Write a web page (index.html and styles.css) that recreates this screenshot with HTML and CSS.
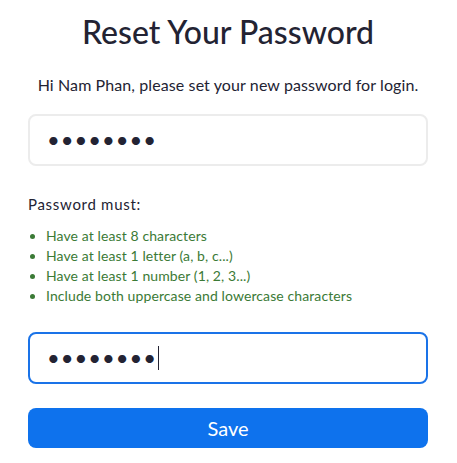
FILE: index.html
```html
<!DOCTYPE html>
<html lang="en">
<head>
<meta charset="utf-8">
<title>Reset Your Password</title>
<link rel="stylesheet" href="styles.css">
</head>
<body>
<main class="page">
  <h1 class="title">Reset Your Password</h1>
  <p class="intro">Hi Nam Phan, please set your new password for login.</p>
  <div class="field"><span class="dots">••••••••</span></div>
  <p class="rules-head">Password must:</p>
  <ul class="rules">
    <li>Have at least 8 characters</li>
    <li>Have at least 1 letter (a, b, c...)</li>
    <li>Have at least 1 number (1, 2, 3...)</li>
    <li>Include both uppercase and lowercase characters</li>
  </ul>
  <div class="field field-focus"><span class="dots">••••••••</span><span class="caret"></span></div>
  <button class="save" type="button">Save</button>
</main>
</body>
</html>
```
FILE: styles.css
```css
* { box-sizing: border-box; }
html, body { margin: 0; padding: 0; background: #fff; }
body {
  font-family: Lato, "Open Sans", "Liberation Sans", sans-serif;
  color: #232333;
}
.page {
  width: 457px;
  padding: 13px 29px 0 28px;
  display: flex;
  flex-direction: column;
}
.title {
  margin: 0;
  font-size: 32px;
  line-height: 38px;
  font-weight: 500;
  text-align: center;
  color: #232333;
}
.intro {
  margin: 24px 0 0;
  font-size: 16px;
  line-height: 20px;
  letter-spacing: 0.1px;
  text-align: center;
}
.field {
  margin-top: 19px;
  height: 52px;
  border: 2px solid #ececec;
  border-radius: 8px;
  display: flex;
  align-items: center;
  padding-left: 17px;
}
.dots {
  font-size: 22px;
  line-height: 24px;
  letter-spacing: 1px;
  color: #232333;
}
.field-focus {
  margin-top: 26px;
  border-color: #1a73e8;
}
.caret {
  width: 1px;
  height: 24px;
  background: #232333;
  margin-left: 1px;
}
.rules-head {
  margin: 28px 0 0;
  font-size: 15px;
  line-height: 20px;
  letter-spacing: 0.7px;
}
.rules {
  margin: 12px 0 0;
  padding: 0 0 0 18px;
  font-size: 14px;
  line-height: 20px;
  letter-spacing: 0.1px;
  color: #3b7a36;
}
.save {
  margin-top: 24px;
  height: 40px;
  border: 0;
  border-radius: 8px;
  background: #0e72ed;
  color: #fff;
  font-family: Lato, "Open Sans", sans-serif;
  font-size: 20px;
}
```
